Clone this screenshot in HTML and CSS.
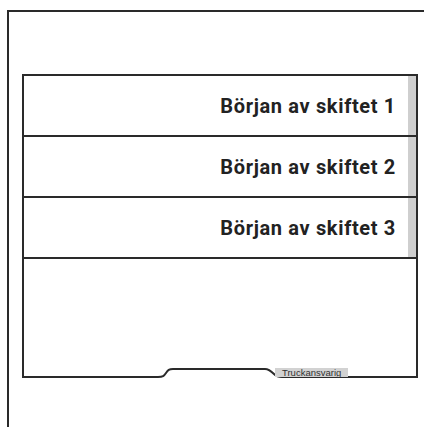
FILE: index.html
```html
<!DOCTYPE html>
<html lang="sv">
<head>
<meta charset="utf-8">
<link rel="stylesheet" href="styles.css">
</head>
<body>
<div class="frame">
  <div class="panel">
    <div class="row"><span class="label">Början av skiftet 1</span></div>
    <div class="row"><span class="label">Början av skiftet 2</span></div>
    <div class="row"><span class="label">Början av skiftet 3</span></div>
    <div class="empty"></div>
    <svg class="edge" width="396" height="14" viewBox="0 0 396 14">
      <path d="M0 12 H136 C141 12 142 11 144 8 C146 5 147 4 151 4 H243 C247 4 249 6 252 9 C254 11 256 12 260 12 H396" fill="none" stroke="#2a2a2a" stroke-width="2"/>
    </svg>
    <span class="tag">Truckansvarig</span>
  </div>
</div>
</body>
</html>
```

FILE: styles.css
```css
html, body {
  margin: 0;
  padding: 0;
  background: #ffffff;
  overflow: hidden;
}

body {
  width: 424px;
  height: 427px;
  font-family: Roboto, "Liberation Sans", sans-serif;
}

.frame {
  margin-left: 7px;
  margin-top: 10px;
  width: 417px;
  height: 417px;
  border-left: 2px solid #2a2a2a;
  border-top: 2px solid #2a2a2a;
  padding: 62px 0 0 13px;
  box-sizing: border-box;
}

.panel {
  position: relative;
  width: 396px;
  border: 2px solid #2a2a2a;
  border-bottom: none;
  box-sizing: border-box;
  display: flex;
  flex-direction: column;
}

.row {
  height: 61px;
  box-sizing: border-box;
  border-bottom: 2px solid #2a2a2a;
  box-shadow: inset -8px 0 0 #cfcfcf;
  display: flex;
  align-items: center;
  justify-content: flex-end;
  padding-right: 20px;
}

.label {
  font-size: 20px;
  font-weight: 700;
  color: #222222;
  letter-spacing: 0.65px;
}

.empty {
  height: 119px;
}

.edge {
  position: absolute;
  left: -2px;
  bottom: -1px;
  display: block;
}

.tag {
  position: absolute;
  left: 251px;
  bottom: 1px;
  height: 9px;
  line-height: 9px;
  padding: 0 7px 0 7px;
  background: #d2d2d2;
  color: #333333;
  font-family: "Liberation Sans", Arial, sans-serif;
  font-size: 9.5px;
}
```
